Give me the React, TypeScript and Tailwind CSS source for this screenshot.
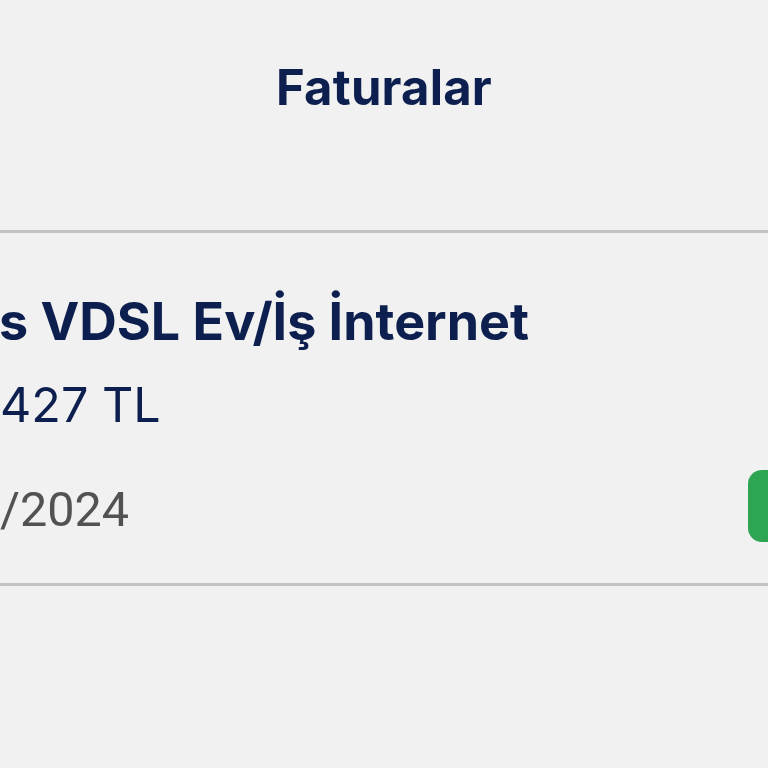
export default function App() {
  return (
    <div className="w-[768px] h-[768px] overflow-hidden bg-[#f1f1f1] flex flex-col" style={{ fontFamily: 'Inter, "Noto Sans", sans-serif' }}>
      <header className="h-[230px] flex items-start justify-center pt-[52px]">
        <h1 className="text-[49px] font-bold leading-[72px] text-[#0c1f4e] tracking-[0.2px]">Faturalar</h1>
      </header>
      <div className="h-[3px] bg-[#c3c3c3]" />
      <div className="h-[350px] flex flex-col pt-[53px]">
        <div className="text-[52px] font-bold leading-[72px] text-[#0c1f4e] whitespace-nowrap -ml-[1px]">s VDSL Ev/İş İnternet</div>
        <div className="text-[48.5px] font-normal leading-[58px] text-[#0c1f4e] whitespace-nowrap mt-[18px]">427 TL</div>
        <div className="flex items-start justify-between h-[72px] mt-[36px]">
          <div className="text-[48.5px] leading-[72px] pt-[4px] text-[#525252] whitespace-nowrap" style={{ fontFamily: 'Roboto, sans-serif' }}>/2024</div>
          <div className="w-[40px] h-[72px] rounded-l-[14px] bg-[#2ea553] -mr-[20px]" />
        </div>
      </div>
      <div className="h-[3px] bg-[#c3c3c3]" />
    </div>
  );
}
